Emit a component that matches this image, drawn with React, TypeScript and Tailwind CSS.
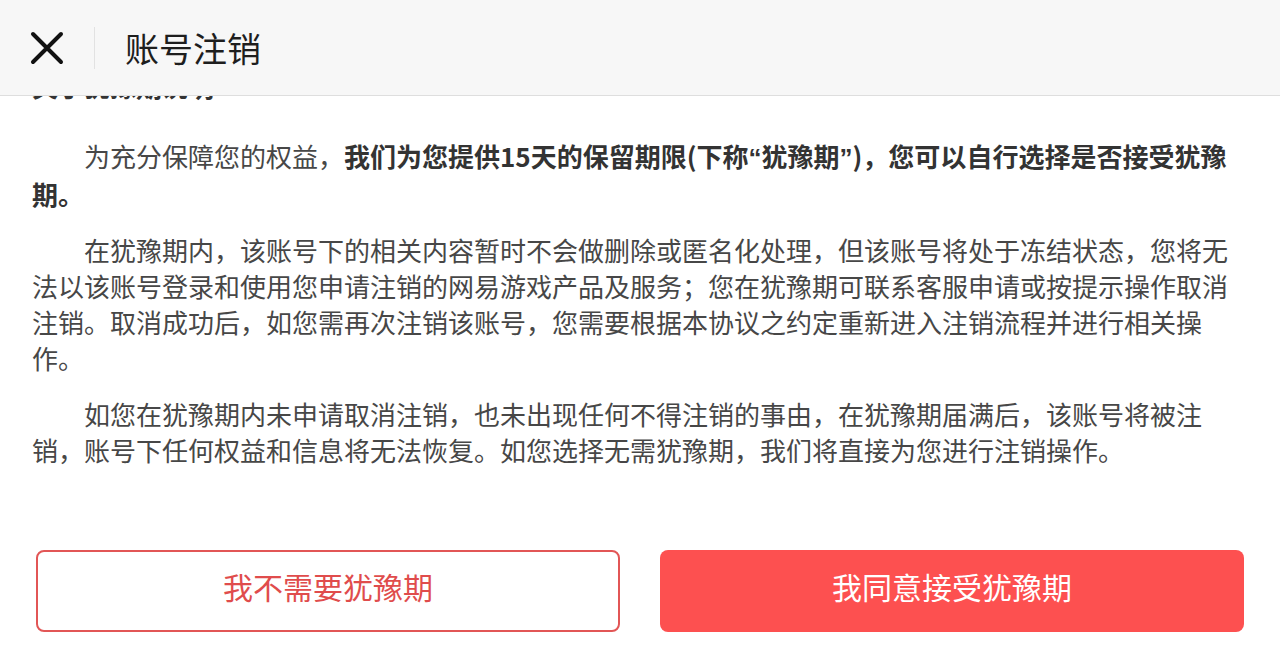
import React from "react";

// 账号注销 - 犹豫期说明页
const font = "font-['Noto_Sans_CJK_SC','Noto_Sans',sans-serif]";

const CloseIcon: React.FC = () => (
  <svg width="34" height="34" viewBox="0 0 34 34" className="shrink-0">
    <path d="M3 3 L31 31 M31 3 L3 31" stroke="#111" strokeWidth="4" strokeLinecap="round" />
  </svg>
);

// 半角引号（参考图中引号较窄）
const Q: React.FC<{ c: string }> = ({ c }) => (
  <span className="font-['Liberation_Sans',sans-serif]">{c}</span>
);

const App: React.FC = () => {
  return (
    <div className={`h-screen w-full flex flex-col bg-white ${font}`}>
      {/* 顶部栏 */}
      <div className="h-[96px] shrink-0 flex items-center bg-[#f7f7f7] border-b border-[#dedede] pl-[30px]">
        <CloseIcon />
        <div className="ml-[30px] h-[42px] w-px bg-[#e2e2e2]" />
        <div className="ml-[30px] text-[34px] leading-none text-[#1e1e1e]">账号注销</div>
      </div>

      {/* 内容（已滚动） */}
      <div className="flex-1 overflow-hidden">
        <div className="-mt-[28px] px-[32px] text-[26px] leading-[36px] text-[#474747]">
          <div className="font-bold text-[#333]">关于犹豫期说明</div>
          <p className="mt-[34px] indent-[52px]">
            为充分保障您的权益，
            <b className="text-[#333]">
              我们为您提供15天的保留期限(下称<Q c="“" />犹豫期<Q c="”" />)，您可以自行选择是否接受犹豫期。
            </b>
          </p>
          <p className="mt-[20px] indent-[52px]">
            在犹豫期内，该账号下的相关内容暂时不会做删除或匿名化处理，但该账号将处于冻结状态，您将无法以该账号登录和使用您申请注销的网易游戏产品及服务；您在犹豫期可联系客服申请或按提示操作取消注销。取消成功后，如您需再次注销该账号，您需要根据本协议之约定重新进入注销流程并进行相关操作。
          </p>
          <p className="mt-[20px] indent-[52px]">
            如您在犹豫期内未申请取消注销，也未出现任何不得注销的事由，在犹豫期届满后，该账号将被注销，账号下任何权益和信息将无法恢复。如您选择无需犹豫期，我们将直接为您进行注销操作。
          </p>
        </div>
      </div>

      {/* 底部按钮 */}
      <div className="shrink-0 grid grid-cols-2 gap-[40px] px-[36px] pb-[40px]">
        <button className="h-[82px] pb-[10px] rounded-[8px] border-2 border-[#e25656] bg-white text-[30px] text-[#e04c4c]">
          我不需要犹豫期
        </button>
        <button className="h-[82px] pb-[10px] rounded-[8px] bg-[#fd5050] text-[30px] text-white">
          我同意接受犹豫期
        </button>
      </div>
    </div>
  );
};

export default App;
